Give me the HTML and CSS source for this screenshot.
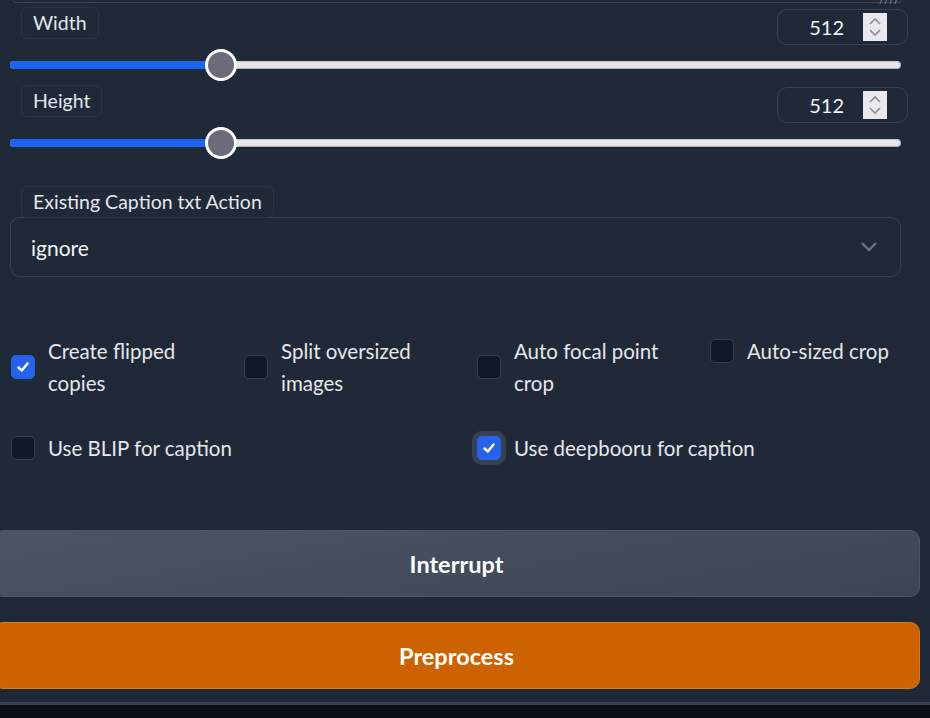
FILE: index.html
```html
<!DOCTYPE html>
<html>
<head>
<meta charset="utf-8">
<link rel="stylesheet" href="styles.css">
</head>
<body>
<div class="prev-box"><svg class="grip" width="22" height="6" viewBox="0 0 22 6"><path d="M3 6 L5 0 M8 6 L10 0 M13 6 L15 0 M18 6 L20 0" stroke="#6b7280" stroke-width="1.2"/></svg></div>
<div class="page">
  <div class="slider-block">
    <div class="head">
      <span class="label">Width</span>
      <div class="number"><span class="val">512</span><span class="spin"><svg width="14" height="24" viewBox="0 0 14 24"><path d="M2 9 L7 4 L12 9" fill="none" stroke="#8b8b99" stroke-width="1.6"/><path d="M2 15 L7 20 L12 15" fill="none" stroke="#8b8b99" stroke-width="1.6"/></svg></span></div>
    </div>
    <div class="track"><div class="fill" style="width:210px"></div><div class="thumb" style="left:194px"></div></div>
  </div>
  <div class="slider-block">
    <div class="head">
      <span class="label">Height</span>
      <div class="number"><span class="val">512</span><span class="spin"><svg width="14" height="24" viewBox="0 0 14 24"><path d="M2 9 L7 4 L12 9" fill="none" stroke="#8b8b99" stroke-width="1.6"/><path d="M2 15 L7 20 L12 15" fill="none" stroke="#8b8b99" stroke-width="1.6"/></svg></span></div>
    </div>
    <div class="track"><div class="fill" style="width:210px"></div><div class="thumb" style="left:194px"></div></div>
  </div>

  <div class="dropdown-block">
    <span class="label">Existing Caption txt Action</span>
    <div class="dropdown"><span>ignore</span><svg width="18" height="12" viewBox="0 0 18 12"><path d="M2 2 L9 9 L16 2" fill="none" stroke="#6b7280" stroke-width="2.4"/></svg></div>
  </div>

  <div class="checks four">
    <label class="check"><span class="box on"><svg viewBox="0 0 16 16" width="16" height="16"><path d="M3.5 8.5 L6.8 11.5 L12.5 4.5" fill="none" stroke="#fff" stroke-width="2.4" stroke-linecap="round" stroke-linejoin="round"/></svg></span><span class="txt">Create flipped copies</span></label>
    <label class="check"><span class="box"></span><span class="txt">Split oversized images</span></label>
    <label class="check"><span class="box"></span><span class="txt">Auto focal point crop</span></label>
    <label class="check"><span class="box"></span><span class="txt">Auto-sized crop</span></label>
  </div>
  <div class="checks two">
    <label class="check"><span class="box"></span><span class="txt">Use BLIP for caption</span></label>
    <label class="check"><span class="box on focus"><svg viewBox="0 0 16 16" width="16" height="16"><path d="M3.5 8.5 L6.8 11.5 L12.5 4.5" fill="none" stroke="#fff" stroke-width="2.4" stroke-linecap="round" stroke-linejoin="round"/></svg></span><span class="txt">Use deepbooru for caption</span></label>
  </div>

  <button class="btn secondary">Interrupt</button>
  <button class="btn primary">Preprocess</button>
</div>
<div class="footer-line"></div>
<div class="footer"></div>
</body>
</html>
```

FILE: styles.css
```css
html, body {
  margin: 0;
  padding: 0;
  background: #1f2937;
  overflow: hidden;
  width: 930px;
  height: 718px;
}
body {
  font-family: "Lato", "Liberation Sans", sans-serif;
  color: #e5e7eb;
}
.prev-box {
  position: relative;
  margin-left: 13px;
  width: 887px;
  height: 2px;
  border: 1px solid #374151;
  border-top: none;
  border-radius: 0 0 10px 10px;
}
.grip {
  position: absolute;
  right: 2px;
  top: -2px;
}
.page {
  padding: 0 29px 0 10px;
}
.slider-block {
  height: 78px;
}
.slider-block:first-child {
  margin-top: 4px;
}
.head {
  display: flex;
  justify-content: space-between;
  align-items: flex-start;
  height: 38px;
}
.label {
  display: inline-block;
  margin-left: 11px;
  padding: 0 11px;
  height: 30px;
  line-height: 30px;
  font-size: 19.5px;
  border: 1px solid #2b3544;
  border-radius: 6px;
  background: #1f2937;
  color: #e5e7eb;
}
.number {
  margin-top: 2px;
  margin-right: -7px;
  width: 129px;
  height: 34px;
  border: 1px solid #374151;
  border-radius: 10px;
  display: flex;
  align-items: center;
  justify-content: flex-end;
  box-sizing: content-box;
}
.val {
  font-size: 20px;
  color: #f3f4f6;
  margin-right: 19px;
}
.spin {
  width: 24px;
  height: 28px;
  background: #e8e8ee;
  margin-right: 20px;
  display: flex;
  align-items: center;
  justify-content: center;
}
.track {
  position: relative;
  margin-top: 16px;
  height: 6px;
  background: #e5e5ea;
  border: 1px solid #b0b0b8;
  border-top-color: #c8c8ce;
  border-radius: 4px;
}
.fill {
  position: absolute;
  left: -1px;
  top: -1px;
  bottom: -1px;
  background: #1a66f0;
  border-radius: 4px 0 0 4px;
}
.thumb {
  position: absolute;
  top: -13px;
  width: 26px;
  height: 26px;
  border: 3px solid #fff;
  border-radius: 50%;
  background: #6b6b79;
}
.dropdown-block {
  margin-top: 23px;
}
.dropdown-block .label {
  display: block;
  width: fit-content;
  position: relative;
  z-index: 1;
  margin-bottom: -1px;
}
.dropdown {
  height: 58px;
  border: 1px solid #374151;
  border-radius: 10px;
  display: flex;
  align-items: center;
  justify-content: space-between;
  padding: 0 22px 0 20px;
  font-size: 21px;
  color: #f3f4f6;
}
.checks {
  display: grid;
  column-gap: 12px;
  align-items: start;
}
.checks.four {
  margin-top: 58px;
  grid-template-columns: 221px 221px 221px 221px;
}
.checks.two {
  margin-top: 33px;
  grid-template-columns: 454px 454px;
}
.check {
  display: flex;
  align-items: center;
  font-size: 20.5px;
  line-height: 32px;
  color: #e5e7eb;
}
.check .txt {
  margin-left: 13px;
}
.four .check .txt {
  max-width: 150px;
}
.box {
  flex: none;
  width: 22px;
  height: 22px;
  margin-left: 1px;
  border: 1px solid #374151;
  background: #111827;
  border-radius: 5px;
  display: flex;
  align-items: center;
  justify-content: center;
}
.box.on {
  background: #2563eb;
  border-color: #2563eb;
}
.box.focus {
  box-shadow: 0 0 0 5px #374151;
}
.btn {
  display: block;
  margin-left: -17px;
  width: 927px;
  height: 67px;
  border-radius: 10px;
  font-family: "Lato", "Liberation Sans", sans-serif;
  font-size: 23.5px;
  font-weight: 700;
  color: #fff;
  cursor: pointer;
}
.btn.secondary {
  margin-top: 66px;
  background: linear-gradient(170deg, #4b5563, #3b4554);
  border: 1px solid #4b5563;
}
.btn.primary {
  margin-top: 25px;
  background: #cd6200;
  border: 1px solid #e0791d;
}
.footer-line {
  margin-top: 13px;
  height: 3px;
  background: #374151;
}
.footer {
  height: 20px;
  background: #0b0f19;
}
```
